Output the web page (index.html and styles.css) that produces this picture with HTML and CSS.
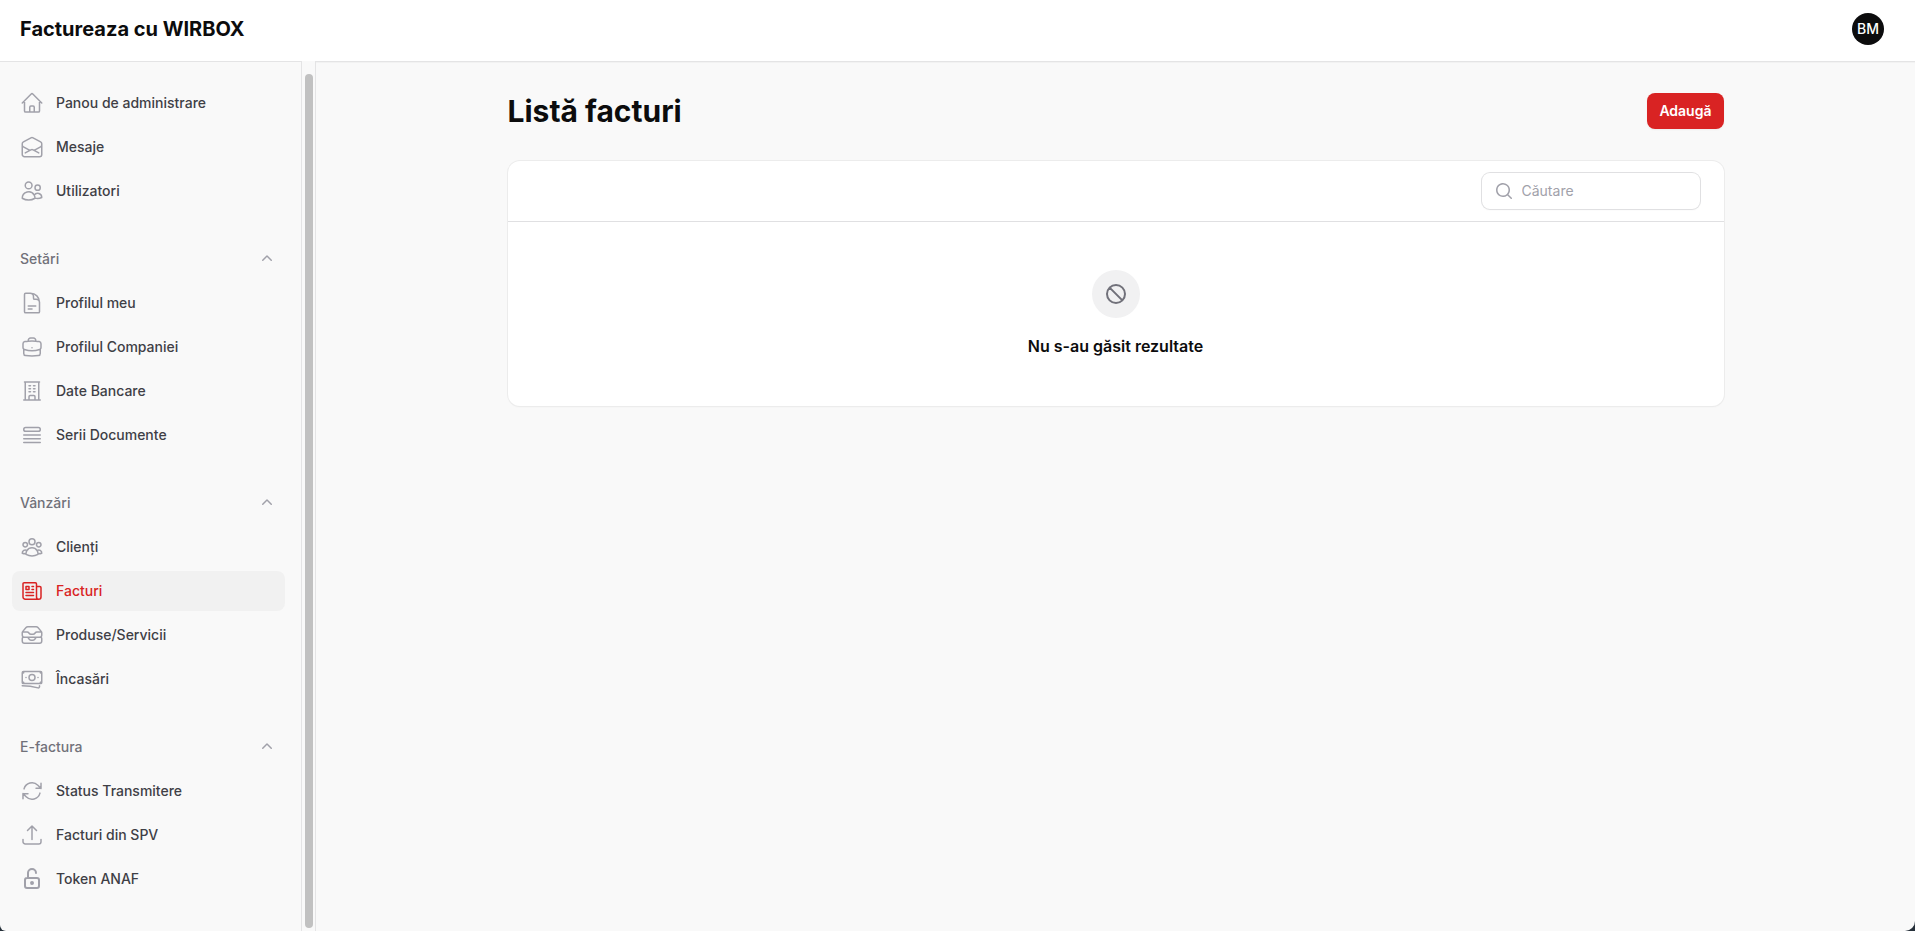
FILE: index.html
```html
<!DOCTYPE html>
<html lang="ro">
<head>
    <meta charset="UTF-8">
    <meta name="viewport" content="width=device-width, initial-scale=1.0">
    <title>Listă facturi - Factureaza cu WIRBOX</title>
    <link rel="stylesheet" href="styles.css">
</head>
<body>
    <div class="page">
        <header class="topbar">
            <a href="#" class="brand">Factureaza cu WIRBOX</a>
            <button type="button" class="avatar">BM</button>
        </header>

        <div class="layout">
            <aside class="sidebar">
                <nav class="nav">
                    <ul class="nav-list">
                        <li><a href="#" class="nav-item">
                            <svg class="icon" viewBox="0 0 24 24"><path d="m2.25 12 8.954-8.955c.44-.439 1.152-.439 1.591 0L21.75 12M4.5 9.75v10.125c0 .621.504 1.125 1.125 1.125H9.75v-4.875c0-.621.504-1.125 1.125-1.125h2.25c.621 0 1.125.504 1.125 1.125V21h4.125c.621 0 1.125-.504 1.125-1.125V9.75M8.25 21h8.25"/></svg>
                            Panou de administrare
                        </a></li>
                        <li><a href="#" class="nav-item">
                            <svg class="icon" viewBox="0 0 24 24"><path d="M21.75 9v.906a2.25 2.25 0 0 1-1.183 1.981l-6.478 3.488M2.25 9v.906a2.25 2.25 0 0 0 1.183 1.981l6.478 3.488m8.839 2.51-4.66-2.51m0 0-1.023-.55a2.25 2.25 0 0 0-2.134 0l-1.022.55m0 0-4.661 2.51m16.5 1.615a2.25 2.25 0 0 1-2.25 2.25h-15a2.25 2.25 0 0 1-2.25-2.25V8.844a2.25 2.25 0 0 1 1.183-1.981l7.5-4.039a2.25 2.25 0 0 1 2.134 0l7.5 4.039a2.25 2.25 0 0 1 1.183 1.98V19.5Z"/></svg>
                            Mesaje
                        </a></li>
                        <li><a href="#" class="nav-item">
                            <svg class="icon" viewBox="0 0 24 24"><path d="M15 19.128a9.38 9.38 0 0 0 2.625.372 9.337 9.337 0 0 0 4.121-.952 4.125 4.125 0 0 0-7.533-2.493M15 19.128v-.003c0-1.113-.285-2.16-.786-3.07M15 19.128v.106A12.318 12.318 0 0 1 8.624 21c-2.331 0-4.512-.645-6.374-1.766l-.001-.109a6.375 6.375 0 0 1 11.964-3.07M12 6.375a3.375 3.375 0 1 1-6.75 0 3.375 3.375 0 0 1 6.75 0Zm8.25 2.25a2.625 2.625 0 1 1-5.25 0 2.625 2.625 0 0 1 5.25 0Z"/></svg>
                            Utilizatori
                        </a></li>
                    </ul>

                    <section class="nav-group">
                        <button type="button" class="nav-title">
                            Setări
                            <svg class="icon-mini" viewBox="0 0 20 20"><path d="M9.47 6.47a.75.75 0 0 1 1.06 0l4.25 4.25a.75.75 0 1 1-1.06 1.06L10 8.06l-3.72 3.72a.75.75 0 0 1-1.06-1.06l4.25-4.25Z"/></svg>
                        </button>
                        <ul class="nav-list">
                            <li><a href="#" class="nav-item">
                                <svg class="icon" viewBox="0 0 24 24"><path d="M19.5 14.25v-2.625a3.375 3.375 0 0 0-3.375-3.375h-1.5A1.125 1.125 0 0 1 13.5 7.125v-1.5a3.375 3.375 0 0 0-3.375-3.375H8.25m0 12.75h7.5m-7.5 3H12M10.5 2.25H5.625c-.621 0-1.125.504-1.125 1.125v17.25c0 .621.504 1.125 1.125 1.125h12.75c.621 0 1.125-.504 1.125-1.125V11.25a9 9 0 0 0-9-9Z"/></svg>
                                Profilul meu
                            </a></li>
                            <li><a href="#" class="nav-item">
                                <svg class="icon" viewBox="0 0 24 24"><path d="M20.25 14.15v4.25c0 1.094-.787 2.036-1.872 2.18-2.087.277-4.216.42-6.378.42s-4.291-.143-6.378-.42c-1.085-.144-1.872-1.086-1.872-2.18v-4.25m16.5 0a2.18 2.18 0 0 0 .75-1.661V8.706c0-1.081-.768-2.015-1.837-2.175a48.114 48.114 0 0 0-3.413-.387m4.5 8.006c-.194.165-.42.295-.673.38A23.978 23.978 0 0 1 12 15.75c-2.648 0-5.195-.429-7.577-1.22a2.016 2.016 0 0 1-.673-.38m0 0A2.18 2.18 0 0 1 3 12.489V8.706c0-1.081.768-2.015 1.837-2.175a48.111 48.111 0 0 1 3.413-.387m7.5 0V5.25A2.25 2.25 0 0 0 13.5 3h-3a2.25 2.25 0 0 0-2.25 2.25v.894m7.5 0a48.667 48.667 0 0 0-7.5 0M12 12.75h.008v.008H12v-.008Z"/></svg>
                                Profilul Companiei
                            </a></li>
                            <li><a href="#" class="nav-item">
                                <svg class="icon" viewBox="0 0 24 24"><path d="M3.75 21h16.5M4.5 3h15M5.25 3v18m13.5-18v18M9 6.75h1.5m-1.5 3h1.5m-1.5 3h1.5m3-6H15m-1.5 3H15m-1.5 3H15M9 21v-3.375c0-.621.504-1.125 1.125-1.125h3.75c.621 0 1.125.504 1.125 1.125V21"/></svg>
                                Date Bancare
                            </a></li>
                            <li><a href="#" class="nav-item">
                                <svg class="icon" viewBox="0 0 24 24"><path d="M3.75 12h16.5m-16.5 3.75h16.5M3.75 19.5h16.5M5.625 4.5h12.75a1.875 1.875 0 0 1 0 3.75H5.625a1.875 1.875 0 0 1 0-3.75Z"/></svg>
                                Serii Documente
                            </a></li>
                        </ul>
                    </section>

                    <section class="nav-group">
                        <button type="button" class="nav-title">
                            Vânzări
                            <svg class="icon-mini" viewBox="0 0 20 20"><path d="M9.47 6.47a.75.75 0 0 1 1.06 0l4.25 4.25a.75.75 0 1 1-1.06 1.06L10 8.06l-3.72 3.72a.75.75 0 0 1-1.06-1.06l4.25-4.25Z"/></svg>
                        </button>
                        <ul class="nav-list">
                            <li><a href="#" class="nav-item">
                                <svg class="icon" viewBox="0 0 24 24"><path d="M18 18.72a9.094 9.094 0 0 0 3.741-.479 3 3 0 0 0-4.682-2.72m.94 3.198.001.031c0 .225-.012.447-.037.666A11.944 11.944 0 0 1 12 21c-2.17 0-4.207-.576-5.963-1.584A6.062 6.062 0 0 1 6 18.719m12 0a5.971 5.971 0 0 0-.941-3.197m0 0A5.995 5.995 0 0 0 12 12.75a5.995 5.995 0 0 0-5.058 2.772m0 0a3 3 0 0 0-4.681 2.72 8.986 8.986 0 0 0 3.74.477m.94-3.197a5.971 5.971 0 0 0-.94 3.197M15 6.75a3 3 0 1 1-6 0 3 3 0 0 1 6 0Zm6 3a2.25 2.25 0 1 1-4.5 0 2.25 2.25 0 0 1 4.5 0Zm-13.5 0a2.25 2.25 0 1 1-4.5 0 2.25 2.25 0 0 1 4.5 0Z"/></svg>
                                Clienți
                            </a></li>
                            <li><a href="#" class="nav-item active">
                                <svg class="icon" viewBox="0 0 24 24"><path d="M12 7.5h1.5m-1.5 3h1.5m-7.5 3h7.5m-7.5 3h7.5m3-9h3.375c.621 0 1.125.504 1.125 1.125V18a2.25 2.25 0 0 1-2.25 2.25M16.5 7.5V18a2.25 2.25 0 0 0 2.25 2.25M16.5 7.5V4.875c0-.621-.504-1.125-1.125-1.125H4.125C3.504 3.75 3 4.254 3 4.875V18a2.25 2.25 0 0 0 2.25 2.25h13.5M6 7.5h3v3H6v-3Z"/></svg>
                                Facturi
                            </a></li>
                            <li><a href="#" class="nav-item">
                                <svg class="icon" viewBox="0 0 24 24"><path d="m7.875 14.25 1.214 1.942a2.25 2.25 0 0 0 1.908 1.058h2.006c.776 0 1.497-.4 1.908-1.058l1.214-1.942M2.41 9h4.636a2.25 2.25 0 0 1 1.872 1.002l.164.246a2.25 2.25 0 0 0 1.872 1.002h2.092a2.25 2.25 0 0 0 1.872-1.002l.164-.246A2.25 2.25 0 0 1 16.954 9h4.636M2.41 9a2.25 2.25 0 0 0-.16.832V12a2.25 2.25 0 0 0 2.25 2.25h15A2.25 2.25 0 0 0 21.75 12V9.832c0-.287-.055-.57-.16-.832M2.41 9a2.25 2.25 0 0 1 .382-.632l3.285-3.832a2.25 2.25 0 0 1 1.708-.786h8.43c.657 0 1.281.287 1.709.786l3.284 3.832c.163.19.291.404.382.632M4.5 20.25h15A2.25 2.25 0 0 0 21.75 18v-2.625c0-.621-.504-1.125-1.125-1.125H3.375c-.621 0-1.125.504-1.125 1.125V18a2.25 2.25 0 0 0 2.25 2.25Z"/></svg>
                                Produse/Servicii
                            </a></li>
                            <li><a href="#" class="nav-item">
                                <svg class="icon" viewBox="0 0 24 24"><path d="M2.25 18.75a60.07 60.07 0 0 1 15.797 2.101c.727.198 1.453-.342 1.453-1.096V18.75M3.75 4.5v.75A.75.75 0 0 1 3 6h-.75m0 0v-.375c0-.621.504-1.125 1.125-1.125H20.25M2.25 6v9m18-10.5v.75c0 .414.336.75.75.75h.75m-1.5-1.5h.375c.621 0 1.125.504 1.125 1.125v9.75c0 .621-.504 1.125-1.125 1.125h-.375m1.5-1.5H21a.75.75 0 0 0-.75.75v.75m0 0H3.75m0 0h-.375a1.125 1.125 0 0 1-1.125-1.125V15m1.5 1.5v-.75A.75.75 0 0 0 3 15h-.75M15 10.5a3 3 0 1 1-6 0 3 3 0 0 1 6 0Zm3 0h.008v.008H18V10.5Zm-12 0h.008v.008H6V10.5Z"/></svg>
                                Încasări
                            </a></li>
                        </ul>
                    </section>

                    <section class="nav-group">
                        <button type="button" class="nav-title">
                            E-factura
                            <svg class="icon-mini" viewBox="0 0 20 20"><path d="M9.47 6.47a.75.75 0 0 1 1.06 0l4.25 4.25a.75.75 0 1 1-1.06 1.06L10 8.06l-3.72 3.72a.75.75 0 0 1-1.06-1.06l4.25-4.25Z"/></svg>
                        </button>
                        <ul class="nav-list">
                            <li><a href="#" class="nav-item">
                                <svg class="icon" viewBox="0 0 24 24"><path d="M16.023 9.348h4.992v-.001M2.985 19.644v-4.992m0 0h4.992m-4.993 0 3.181 3.183a8.25 8.25 0 0 0 13.803-3.7M4.031 9.865a8.25 8.25 0 0 1 13.803-3.7l3.181 3.182m0-4.991v4.99"/></svg>
                                Status Transmitere
                            </a></li>
                            <li><a href="#" class="nav-item">
                                <svg class="icon" viewBox="0 0 24 24"><path d="M3 16.5v2.25A2.25 2.25 0 0 0 5.25 21h13.5A2.25 2.25 0 0 0 21 18.75V16.5m-13.5-9L12 3m0 0 4.5 4.5M12 3v13.5"/></svg>
                                Facturi din SPV
                            </a></li>
                            <li><a href="#" class="nav-item">
                                <svg class="icon icon-bold" viewBox="0 0 24 24"><path d="M5 13a2 2 0 0 1 2-2h10a2 2 0 0 1 2 2v6a2 2 0 0 1-2 2H7a2 2 0 0 1-2-2v-6ZM11 16a1 1 0 1 0 2 0 1 1 0 1 0-2 0M8 11V6a4 4 0 0 1 8 0"/></svg>
                                Token ANAF
                            </a></li>
                        </ul>
                    </section>
                </nav>
            </aside>

            <div class="scrollbar"><div class="scrollbar-thumb"></div></div>

            <main class="main">
                <div class="content">
                    <div class="page-header">
                        <h1>Listă facturi</h1>
                        <button type="button" class="btn-add">Adaugă</button>
                    </div>

                    <div class="card">
                        <div class="toolbar">
                            <label class="search">
                                <svg class="icon-mini" viewBox="0 0 20 20"><path fill-rule="evenodd" d="M9 3.5a5.5 5.5 0 1 0 0 11 5.5 5.5 0 0 0 0-11ZM2 9a7 7 0 1 1 12.452 4.391l3.328 3.329a.75.75 0 1 1-1.06 1.06l-3.329-3.328A7 7 0 0 1 2 9Z"/></svg>
                                <input type="search" placeholder="Căutare" aria-label="Căutare">
                            </label>
                        </div>
                        <div class="empty">
                            <div class="empty-icon">
                                <svg class="icon icon-bold" viewBox="0 0 24 24"><path d="M18.364 18.364A9 9 0 0 0 5.636 5.636m12.728 12.728A9 9 0 0 1 5.636 5.636m12.728 12.728L5.636 5.636"/></svg>
                            </div>
                            <h2>Nu s-au găsit rezultate</h2>
                        </div>
                    </div>
                </div>
            </main>
        </div>
    </div>
</body>
</html>
```
FILE: styles.css
```css
* {
    box-sizing: border-box;
}

html {
    background-color: #26303a;
}

body {
    margin: 0;
    font-family: Inter, "Noto Sans", sans-serif;
    font-size: 14px;
    line-height: 24px;
    color: #0c0c0d;
}

h1, h2, ul {
    margin: 0;
    padding: 0;
}

ul {
    list-style: none;
}

a {
    color: inherit;
    text-decoration: none;
}

button {
    font: inherit;
    border: none;
    cursor: pointer;
}

.page {
    display: flex;
    flex-direction: column;
    min-height: 100vh;
    background-color: #f9f9f9;
    border-radius: 0 0 10px 6px;
    overflow: hidden;
}

/* Bara de sus */
.topbar {
    display: flex;
    align-items: center;
    justify-content: space-between;
    padding: 13px 31px 16px 20px;
    background-color: white;
}

.brand {
    font-size: 20px;
    font-weight: 700;
}

.avatar {
    width: 32px;
    height: 32px;
    padding: 0;
    border-radius: 50%;
    background-color: #0c0c0d;
    color: white;
    font-weight: 500;
}

.layout {
    display: flex;
    flex: 1;
}

/* Meniul lateral */
.sidebar {
    width: 302px;
    flex-shrink: 0;
    border-top: 1px solid #e4e4e5;
    border-right: 1px solid #e4e4e5;
}

.nav {
    display: flex;
    flex-direction: column;
    gap: 28px;
    padding: 21px 16px 21px 12px;
}

.nav-list,
.nav-group {
    display: flex;
    flex-direction: column;
    gap: 4px;
}

.nav-item,
.nav-title {
    display: flex;
    align-items: center;
    gap: 12px;
    width: 100%;
    height: 40px;
    padding: 8px;
    border-radius: 8px;
    font-weight: 500;
    color: #3f3f46;
}

.nav-title {
    justify-content: space-between;
    background: none;
    color: #71717a;
}

.nav-item:hover,
.nav-item.active {
    background-color: #f1f1f1;
}

.nav-item.active,
.nav-item.active .icon {
    color: #d92323;
}

.icon {
    width: 24px;
    height: 24px;
    flex-shrink: 0;
    fill: none;
    stroke: currentColor;
    stroke-width: 1.5;
    stroke-linecap: round;
    stroke-linejoin: round;
    color: #a1a1aa;
}

.icon-bold {
    stroke-width: 2;
}

.icon-mini {
    width: 20px;
    height: 20px;
    flex-shrink: 0;
    fill: #a1a1aa;
}

.scrollbar {
    display: flex;
    width: 14px;
    flex-shrink: 0;
    padding: 13px 2px 3px 3px;
    border-right: 1px solid #e4e4e5;
}

.scrollbar-thumb {
    flex: 1;
    border-radius: 4px;
    background-color: #c1c1c1;
}

/* Continut */
.main {
    flex: 1;
    padding: 31px 32px;
    border-top: 1px solid #e4e4e5;
    box-shadow: inset 0 1px 1px rgba(0, 0, 0, 0.03);
}

.content {
    display: flex;
    flex-direction: column;
    gap: 32px;
    max-width: 1216px;
    margin: 0 auto;
}

.page-header {
    display: flex;
    align-items: center;
    justify-content: space-between;
}

.page-header h1 {
    font-size: 30px;
    line-height: 36px;
    font-weight: 700;
}

.btn-add {
    height: 36px;
    padding: 0 12px;
    border-radius: 8px;
    background-color: #d92323;
    color: white;
    font-weight: 600;
    box-shadow: 0 1px 2px rgba(0, 0, 0, 0.05);
}

.card {
    background-color: white;
    border-radius: 12px;
    box-shadow: 0 0 0 1px #ececec, 0 1px 2px rgba(0, 0, 0, 0.05);
}

.toolbar {
    display: flex;
    justify-content: flex-end;
    padding: 12px 24px;
    border-bottom: 1px solid #e0e0e2;
}

.search {
    display: flex;
    align-items: center;
    gap: 8px;
    width: 218px;
    height: 36px;
    padding: 0 12px;
    border-radius: 8px;
    box-shadow: 0 0 0 1px #e0e0e2, 0 1px 2px rgba(0, 0, 0, 0.05);
}

.search input {
    width: 100%;
    min-width: 0;
    padding: 0;
    border: none;
    outline: none;
    background: none;
    font: inherit;
}

.search input::placeholder {
    color: #a1a1aa;
}

.empty {
    display: flex;
    flex-direction: column;
    align-items: center;
    gap: 16px;
    padding: 48px 24px;
}

.empty-icon {
    padding: 12px;
    border-radius: 50%;
    background-color: #f1f1f2;
}

.empty-icon .icon {
    display: block;
    color: #71717a;
}

.empty h2 {
    font-size: 16px;
    font-weight: 600;
}
```
